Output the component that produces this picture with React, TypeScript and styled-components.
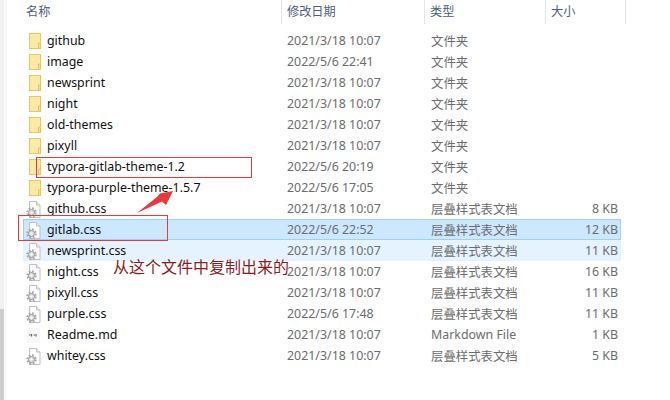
import styled, { createGlobalStyle } from 'styled-components'

const GlobalStyle = createGlobalStyle`
	html, body {
		margin: 0;
		padding: 0;
		background: #fff;
	}
	body {
		font-family: 'Noto Sans', 'Noto Sans CJK SC', sans-serif;
		font-size: 12.4px;
	}
`

const Page = styled.div`
	position: relative;
	display: flex;
	width: 670px;
	height: 400px;
	overflow: hidden;
	background: #fff;
`
const ScrollTrack = styled.div`
	display: flex;
	flex-direction: column;
	justify-content: flex-end;
	width: 4px;
	margin-right: 16px;
	border-right: 3px solid #f9f9f9;
	background: #f1f1f1;
`
const ScrollThumb = styled.div`
	height: 91px;
	background: #cdcdcd;
`
const Explorer = styled.div`
	width: 602px;
`
const HeaderRow = styled.div`
	display: grid;
	grid-template-columns: 259px 143px 121px 80px;
	height: 24px;
	margin-bottom: 6px;
`
const HeaderCell = styled.div`
	padding-left: 3px;
	padding-top: 2px;
	height: 22px;
	line-height: 20px;
	color: #4c607a;
	border-right: 1px solid #e5e5e5;
	font-size: 12.2px;
`
const ColumnHeader = styled(HeaderCell)`
	padding-left: 5px;
`
const FileRow = styled.div<{ $state?: 'selected' | 'hover' }>`
	display: grid;
	grid-template-columns: 259px 143px 121px 72px;
	align-items: center;
	box-sizing: border-box;
	width: 598px;
	height: 21px;
	color: #6d6d6d;
	background: ${(p) => (p.$state === 'selected' ? '#cce8ff' : p.$state === 'hover' ? '#e5f3ff' : 'transparent')};
	outline: ${(p) => (p.$state === 'selected' ? '1px solid #99d1ff' : 'none')};
	outline-offset: -1px;
`
const NameCell = styled.div`
	display: flex;
	align-items: center;
	gap: 6px;
	padding-left: 6px;
	color: #111;
`
const DateCell = styled.div`
	padding-left: 5px;
`
const TypeCell = styled.div`
	padding-left: 6px;
`
const SizeCell = styled.div`
	text-align: right;
`
const IconBox = styled.span`
	display: flex;
	flex: none;
	width: 12px;
	height: 16px;
`
const ShiftedIcon = styled.svg`
	flex: none;
	margin-left: -3px;
`
const RedBox = styled.div<{ $left: number; $top: number; $width: number; $height: number }>`
	position: absolute;
	left: ${(p) => p.$left}px;
	top: ${(p) => p.$top}px;
	width: ${(p) => p.$width}px;
	height: ${(p) => p.$height}px;
	box-sizing: border-box;
	border: 1px solid #e8383b;
`
const Arrow = styled.svg`
	position: absolute;
	left: 130px;
	top: 185px;
`
const Caption = styled.div`
	position: absolute;
	left: 113px;
	top: 257px;
	font-family: 'Noto Sans CJK SC', sans-serif;
	font-size: 16px;
	line-height: 18px;
	color: #8f1c22;
`

function FolderIcon() {
	return (
		<svg width="12" height="16" viewBox="0 0 12 16">
			<rect x="0.5" y="0.5" width="11" height="15" fill="#fde28e" stroke="#eec65a" />
			<path d="M1 1h10v9H9.5v5H1z" fill="#ffe9a6" />
			<path d="M9.5 15v-5H11.5" fill="none" stroke="#e9c158" />
		</svg>
	)
}

function CssIcon() {
	return (
		<ShiftedIcon width="15" height="17" viewBox="0 0 15 17">
			<path d="M3.5 0.5h7l3.5 3.5v12.5H3.5z" fill="#fdfdfd" stroke="#c0c0c0" />
			<path d="M10.5 0.5v3.5H14" fill="#eee" stroke="#c0c0c0" />
			<circle cx="5.5" cy="11.5" r="4.2" fill="none" stroke="#aaa" strokeWidth="2" strokeDasharray="1.8 1.5" />
			<circle cx="5.5" cy="11.5" r="3" fill="#e2e2e2" stroke="#959595" />
			<circle cx="5.5" cy="11.5" r="1" fill="#fff" />
		</ShiftedIcon>
	)
}

function MarkdownIcon() {
	return (
		<ShiftedIcon width="15" height="17" viewBox="0 0 15 17">
			<rect x="1" y="1" width="13" height="15" fill="#f7f7f7" />
			<path d="M3 8h1.5M5.5 7v2.5M7.5 8h1.5M10 7v2.5" stroke="#666" strokeWidth="1.2" />
		</ShiftedIcon>
	)
}

type FileItem = {
	name: string
	date: string
	type: string
	size?: string
	icon: 'folder' | 'css' | 'md'
	state?: 'selected' | 'hover'
}

const FOLDER = '文件夹'
const CSS = '层叠样式表文档'

const files: FileItem[] = [
	{ name: 'github', date: '2021/3/18 10:07', type: FOLDER, icon: 'folder' },
	{ name: 'image', date: '2022/5/6 22:41', type: FOLDER, icon: 'folder' },
	{ name: 'newsprint', date: '2021/3/18 10:07', type: FOLDER, icon: 'folder' },
	{ name: 'night', date: '2021/3/18 10:07', type: FOLDER, icon: 'folder' },
	{ name: 'old-themes', date: '2021/3/18 10:07', type: FOLDER, icon: 'folder' },
	{ name: 'pixyll', date: '2021/3/18 10:07', type: FOLDER, icon: 'folder' },
	{ name: 'typora-gitlab-theme-1.2', date: '2022/5/6 20:19', type: FOLDER, icon: 'folder' },
	{ name: 'typora-purple-theme-1.5.7', date: '2022/5/6 17:05', type: FOLDER, icon: 'folder' },
	{ name: 'github.css', date: '2021/3/18 10:07', type: CSS, size: '8 KB', icon: 'css' },
	{ name: 'gitlab.css', date: '2022/5/6 22:52', type: CSS, size: '12 KB', icon: 'css', state: 'selected' },
	{ name: 'newsprint.css', date: '2021/3/18 10:07', type: CSS, size: '11 KB', icon: 'css', state: 'hover' },
	{ name: 'night.css', date: '2021/3/18 10:07', type: CSS, size: '16 KB', icon: 'css' },
	{ name: 'pixyll.css', date: '2021/3/18 10:07', type: CSS, size: '11 KB', icon: 'css' },
	{ name: 'purple.css', date: '2022/5/6 17:48', type: CSS, size: '11 KB', icon: 'css' },
	{ name: 'Readme.md', date: '2021/3/18 10:07', type: 'Markdown File', size: '1 KB', icon: 'md' },
	{ name: 'whitey.css', date: '2021/3/18 10:07', type: CSS, size: '5 KB', icon: 'css' },
]

export default function App() {
	return (
		<Page>
			<GlobalStyle />
			<ScrollTrack>
				<ScrollThumb />
			</ScrollTrack>
			<Explorer>
				<HeaderRow>
					<HeaderCell>名称</HeaderCell>
					<ColumnHeader>修改日期</ColumnHeader>
					<ColumnHeader>类型</ColumnHeader>
					<ColumnHeader>大小</ColumnHeader>
				</HeaderRow>
				{files.map((file) => (
					<FileRow key={file.name} $state={file.state}>
						<NameCell>
							<IconBox>
								{file.icon === 'folder' && <FolderIcon />}
								{file.icon === 'css' && <CssIcon />}
								{file.icon === 'md' && <MarkdownIcon />}
							</IconBox>
							{file.name}
						</NameCell>
						<DateCell>{file.date}</DateCell>
						<TypeCell>{file.type}</TypeCell>
						<SizeCell>{file.size}</SizeCell>
					</FileRow>
				))}
			</Explorer>
			<RedBox $left={36} $top={157} $width={216} $height={21} />
			<RedBox $left={18} $top={215} $width={150} $height={26} />
			<Arrow width="45" height="35" viewBox="0 0 45 35">
				<path d="M7 28L27 12L30 8.5L43 6L36 20L32 16.5z" fill="#e8383b" />
			</Arrow>
			<Caption>从这个文件中复制出来的</Caption>
		</Page>
	)
}
